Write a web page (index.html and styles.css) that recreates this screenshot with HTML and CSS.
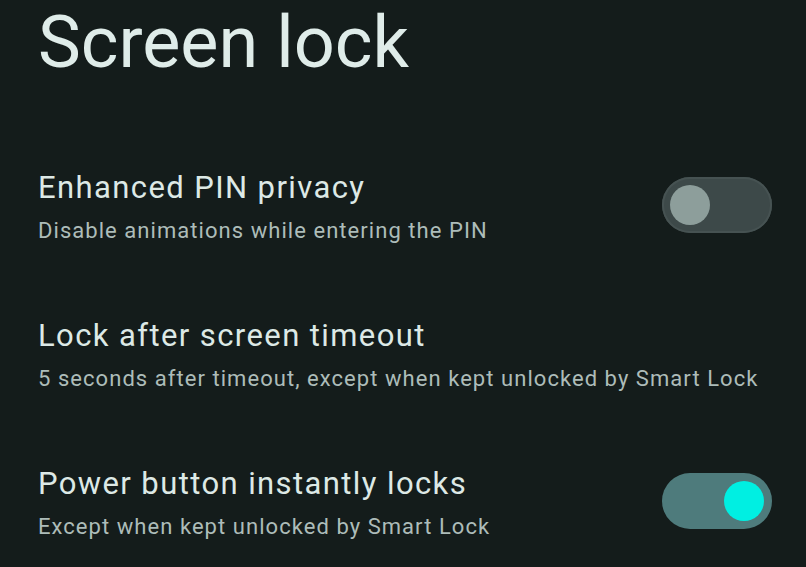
FILE: index.html
```html
<!DOCTYPE html>
<html lang="en">
<head>
    <meta charset="UTF-8">
    <meta name="viewport" content="width=device-width, initial-scale=1.0">
    <title>Screen lock</title>
    <link rel="stylesheet" href="styles.css">
</head>
<body>
    <div class="page">
        <h1 class="page-title">Screen lock</h1>

        <div class="settings">
            <div class="setting">
                <div class="setting-text">
                    <div class="setting-title">Enhanced PIN privacy</div>
                    <div class="setting-summary">Disable animations while entering the PIN</div>
                </div>
                <div class="switch">
                    <div class="switch-thumb"></div>
                </div>
            </div>

            <div class="setting">
                <div class="setting-text">
                    <div class="setting-title">Lock after screen timeout</div>
                    <div class="setting-summary">5 seconds after timeout, except when kept unlocked by Smart Lock</div>
                </div>
            </div>

            <div class="setting">
                <div class="setting-text">
                    <div class="setting-title">Power button instantly locks</div>
                    <div class="setting-summary">Except when kept unlocked by Smart Lock</div>
                </div>
                <div class="switch switch-on">
                    <div class="switch-thumb"></div>
                </div>
            </div>
        </div>
    </div>
</body>
</html>
```

FILE: styles.css
```css
body, html {
    margin: 0;
    padding: 0;
    height: 100%;
    overflow: hidden;
}

body {
    font-family: 'Roboto', 'Liberation Sans', sans-serif;
    background: #141c1b;
    color: #dde9e6;
}

.page {
    padding: 1px 34px 0 38px;
}

.page-title {
    margin: 0;
    font-size: 72px;
    font-weight: 400;
    line-height: 84px;
    color: #dfece9;
}

.settings {
    margin-top: 85px;
    display: flex;
    flex-direction: column;
    gap: 73px;
}

.setting {
    display: flex;
    align-items: center;
    justify-content: space-between;
}

.setting-title {
    font-size: 31px;
    line-height: 36px;
    letter-spacing: 1.4px;
    color: #dde9e6;
}

.setting-summary {
    margin-top: 11px;
    font-size: 22px;
    line-height: 28px;
    letter-spacing: 1.05px;
    color: #adbcb9;
}

/* Toggle switch */
.switch {
    width: 110px;
    height: 56px;
    border-radius: 28px;
    background: #3d4949;
    box-shadow: inset 0 0 0 2px #465252;
    display: flex;
    align-items: center;
    padding: 0 8px;
    box-sizing: border-box;
    margin-bottom: 5px;
}

.switch-thumb {
    width: 40px;
    height: 40px;
    border-radius: 50%;
    background: #8d9e9b;
}

.switch-on {
    background: #4e7b7c;
    box-shadow: none;
    justify-content: flex-end;
}

.switch-on .switch-thumb {
    background: #00efe2;
}
```
